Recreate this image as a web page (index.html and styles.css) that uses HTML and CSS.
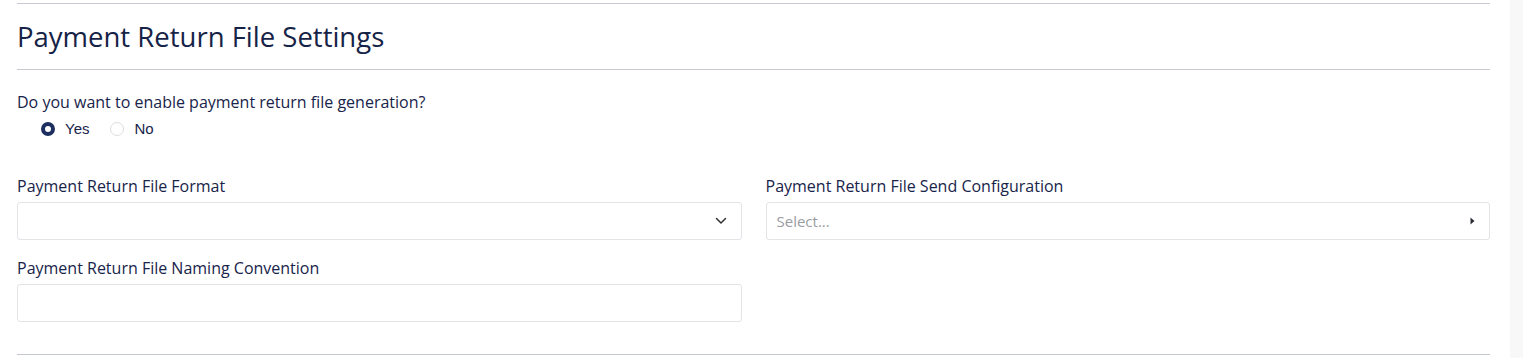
FILE: index.html
```html
<!DOCTYPE html>
<html lang="en">
<head>
  <meta charset="UTF-8">
  <title>Payment Return File Settings</title>
  <link rel="stylesheet" href="styles.css">
</head>
<body>
  <div class="page">
    <main class="settings">
      <h2 class="section-title">Payment Return File Settings</h2>

      <div class="question">
        <p class="question-text">Do you want to enable payment return file generation?</p>
        <div class="radio-group">
          <label class="radio"><span class="dot checked"></span>Yes</label>
          <label class="radio"><span class="dot"></span>No</label>
        </div>
      </div>

      <div class="form-grid">
        <div class="field">
          <label class="field-label">Payment Return File Format</label>
          <div class="control">
            <span class="value"></span>
            <svg class="chevron" width="12" height="8" viewBox="0 0 12 8"><path d="M1.5 1.5 6 6l4.5-4.5" fill="none" stroke="#333" stroke-width="1.5" stroke-linecap="round" stroke-linejoin="round"/></svg>
          </div>
        </div>
        <div class="field">
          <label class="field-label">Payment Return File Send Configuration</label>
          <div class="control">
            <span class="value placeholder">Select...</span>
            <svg class="caret" width="5" height="8" viewBox="0 0 5 8"><path d="M0.5 0.5 4.5 4 0.5 7.5z" fill="#2a2f3a"/></svg>
          </div>
        </div>
        <div class="field">
          <label class="field-label">Payment Return File Naming Convention</label>
          <div class="control"></div>
        </div>
      </div>
    </main>
    <div class="scrollbar"></div>
  </div>
</body>
</html>
```

FILE: styles.css
```css
html, body {
  margin: 0;
  padding: 0;
  background: #fff;
  font-family: 'Open Sans', 'Inter', sans-serif;
  color: #18244a;
}

.page {
  display: flex;
  height: 358px;
}

.settings {
  flex: 1;
  padding: 3px 20px 0 17px;
}

.scrollbar {
  width: 13px;
  background: #f8f8f8;
}

.section-title {
  margin: 0;
  border-top: 1px solid #c9c9d1;
  border-bottom: 1px solid #c9c9d1;
  height: 65px;
  line-height: 65px;
  font-size: 27.5px;
  font-weight: 400;
  color: #162347;
}

.question {
  padding-top: 22px;
}

.question-text {
  margin: 0;
  font-size: 16px;
  line-height: 20px;
}

.radio-group {
  display: flex;
  gap: 21px;
  padding: 8px 0 0 24px;
}

.radio {
  display: flex;
  align-items: center;
  gap: 10px;
  font-family: 'Liberation Sans', Arial, sans-serif;
  font-size: 15px;
  line-height: 18px;
}

.dot {
  width: 14px;
  height: 14px;
  border-radius: 50%;
  border: 1px solid #dcdde2;
  box-sizing: border-box;
}

.dot.checked {
  border: 4px solid #1c2f5e;
  background: #fff;
}

.form-grid {
  display: grid;
  grid-template-columns: 1fr 1fr;
  column-gap: 24px;
  row-gap: 18px;
  padding-top: 38px;
  padding-bottom: 32px;
  border-bottom: 1px solid #c3c7cf;
}

.field-label {
  display: block;
  font-size: 16px;
  line-height: 20px;
  margin-bottom: 6px;
}

.control {
  height: 38px;
  box-sizing: border-box;
  border: 1px solid #e3e3e8;
  border-radius: 3px;
  display: flex;
  align-items: center;
  padding: 0 14px 0 10px;
}

.value {
  flex: 1;
  font-size: 15px;
}

.placeholder {
  color: #9a9ca3;
}
```
